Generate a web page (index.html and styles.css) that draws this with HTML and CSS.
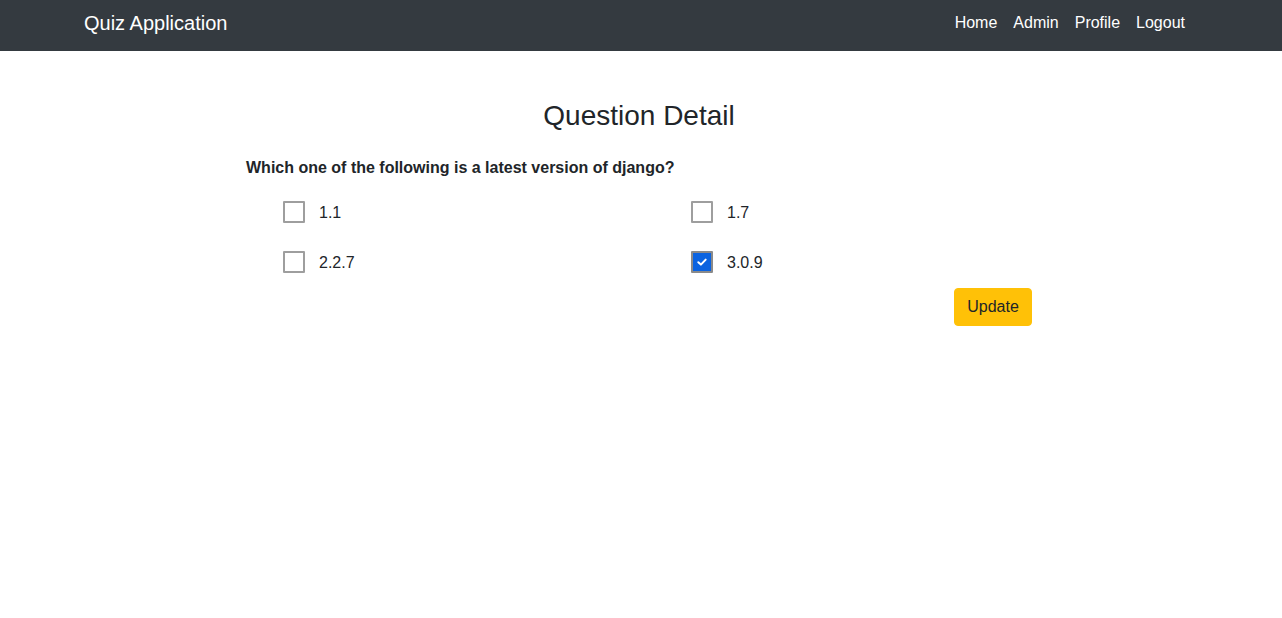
FILE: index.html
```html
<!DOCTYPE html>
<html>
<head>
<meta charset="utf-8">
<title>Quiz Application</title>
<link rel="stylesheet" href="styles.css">
</head>
<body>
<nav class="navbar">
  <div class="nav-inner">
    <a class="brand" href="#">Quiz Application</a>
    <ul class="nav-links">
      <li><a href="#">Home</a></li>
      <li><a href="#">Admin</a></li>
      <li><a href="#">Profile</a></li>
      <li><a href="#">Logout</a></li>
    </ul>
  </div>
</nav>
<main class="content">
  <h3 class="title">Question Detail</h3>
  <p class="question">Which one of the following is a latest version of django?</p>
  <div class="options">
    <label class="option"><span class="box"></span><span class="opt-text">1.1</span></label>
    <label class="option"><span class="box"></span><span class="opt-text">1.7</span></label>
    <label class="option"><span class="box"></span><span class="opt-text">2.2.7</span></label>
    <label class="option"><span class="box checked"><svg viewBox="0 0 12 12" width="12" height="12"><path d="M2.3 6.2 L4.9 8.6 L9.7 3.6" fill="none" stroke="#fff" stroke-width="2" stroke-linecap="round" stroke-linejoin="round"/></svg></span><span class="opt-text">3.0.9</span></label>
  </div>
  <div class="actions">
    <button class="btn-update">Update</button>
  </div>
</main>
</body>
</html>
```

FILE: styles.css
```css
* { box-sizing: border-box; }
body {
  margin: 0;
  font-family: "Liberation Sans", Arial, sans-serif;
  font-size: 16px;
  color: #212529;
  background: #fff;
}
.navbar {
  background: #343a40;
  height: 51px;
}
.nav-inner {
  width: 1140px;
  margin: 0 auto;
  padding: 0 18px 0 13px;
  height: 51px;
  display: flex;
  align-items: center;
  justify-content: space-between;
}
.brand {
  color: #fff;
  text-decoration: none;
  font-size: 20px;
  line-height: 30px;
  margin-top: -6px;
}
.nav-links {
  list-style: none;
  margin: -6px 0 0 0;
  padding: 0;
  display: flex;
}
.nav-links a {
  display: block;
  color: #fff;
  text-decoration: none;
  padding: 8px 8px;
  line-height: 24px;
}
.content {
  width: 786px;
  margin: 0 auto;
  padding-top: 48px;
  position: relative;
  left: -2px;
}
.title {
  margin: 0 0 24px 0;
  text-align: center;
  font-size: 28px;
  font-weight: 400;
  line-height: 33px;
}
.question {
  margin: 0 0 21px 0;
  font-weight: 700;
  line-height: 24px;
}
.options {
  display: grid;
  grid-template-columns: 408px 408px;
  margin: 0 -15px;
  row-gap: 28px;
}
.option {
  display: flex;
  align-items: center;
  padding-left: 52px;
  height: 22px;
}
.box {
  width: 22px;
  height: 22px;
  border: 2px solid #9e9e9e;
  border-radius: 1px;
  background: #fff;
  display: flex;
  align-items: center;
  justify-content: center;
  flex: none;
}
.box.checked {
  background: #0b63e0;
  border-color: #8a8a8a;
}
.opt-text {
  margin-left: 14px;
  padding-top: 2px;
  line-height: 24px;
}
.actions {
  display: flex;
  justify-content: flex-end;
  margin-top: 15px;
}
.btn-update {
  font-family: inherit;
  font-size: 16px;
  color: #212529;
  background: #ffc107;
  border: 1px solid #ffc107;
  border-radius: 4px;
  padding: 6px 12px;
  line-height: 24px;
  height: 38px;
  width: 78px;
}
```
